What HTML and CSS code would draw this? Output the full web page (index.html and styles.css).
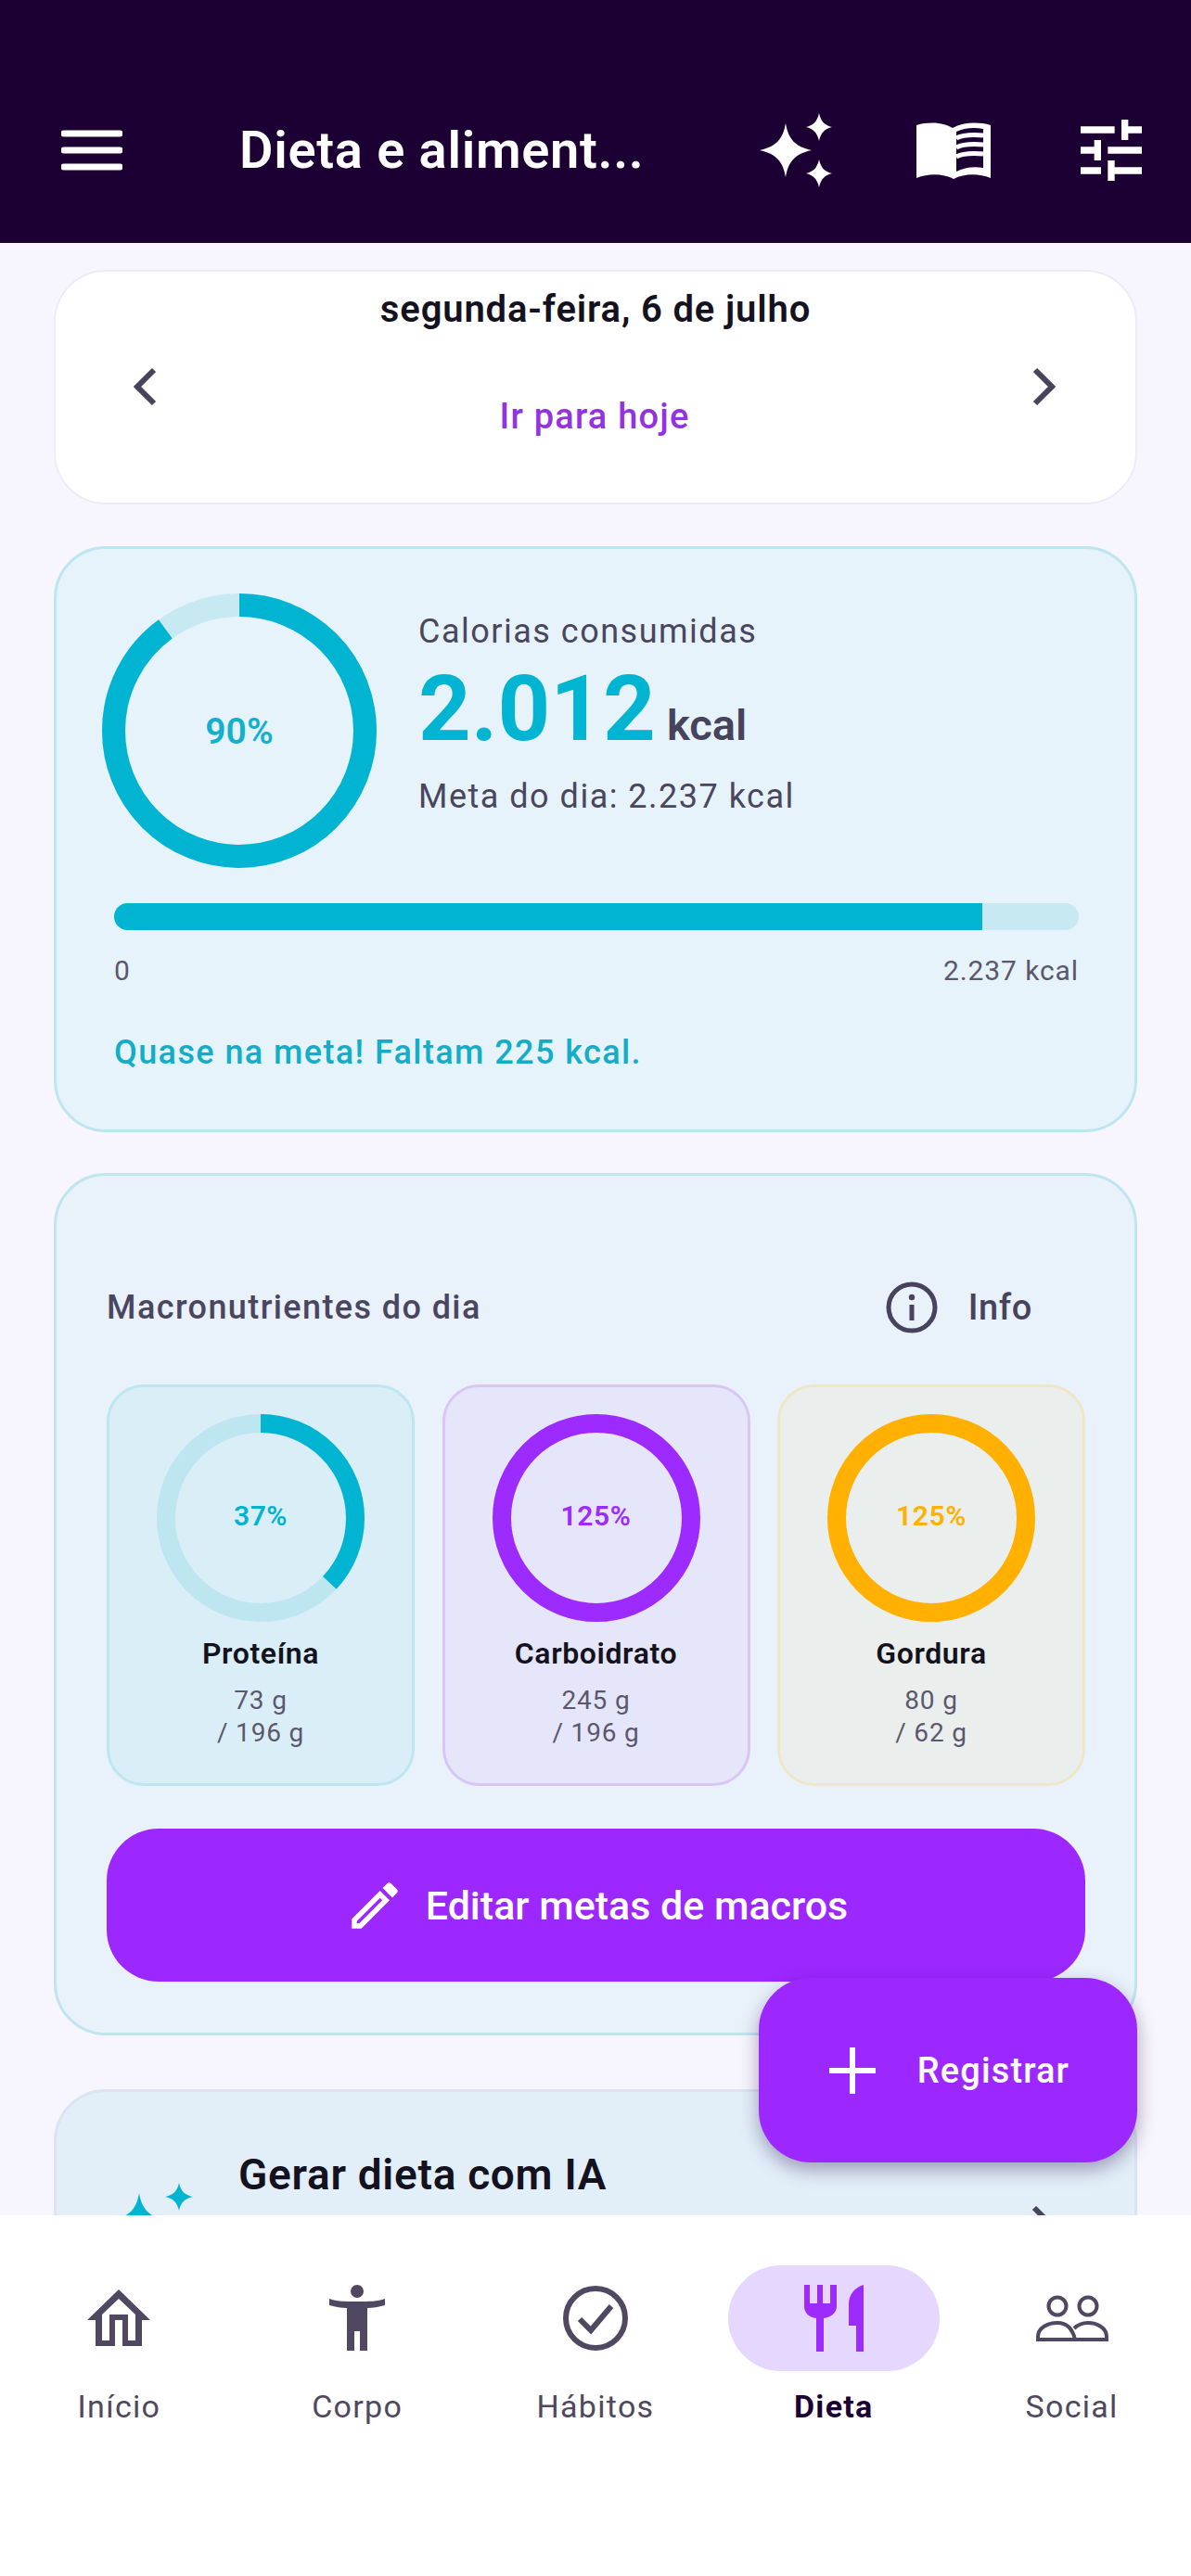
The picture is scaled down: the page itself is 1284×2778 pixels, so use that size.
FILE: index.html
```html
<!DOCTYPE html>
<html lang="pt-BR">
<head>
    <meta charset="UTF-8">
    <meta name="viewport" content="width=device-width, initial-scale=1.0">
    <title>Dieta e alimentação</title>
    <link rel="stylesheet" href="styles.css">
</head>
<body>
    <div class="screen">
        <div class="header">
            <svg class="menu-icon" width="66" height="44" viewBox="0 0 66 44">
                <path d="M3 4H63M3 22H63M3 40H63" stroke="#FFF" stroke-width="7" stroke-linecap="round" fill="none"/>
            </svg>
            <div class="header-title">Dieta e aliment...</div>
            <div class="header-actions">
                <svg width="80" height="82" viewBox="0 0 80 82">
                    <path fill="#FFF" d="M29 12C32 29 39 37 57 41C39 45 32 53 29 70C26 53 19 45 1 41C19 37 26 29 29 12Z"/>
                    <path fill="#FFF" d="M65 1C67 10 71 14 79 16C71 18 67 22 65 31C63 22 59 18 51 16C59 14 63 10 65 1Z"/>
                    <path fill="#FFF" d="M65 51C67 60 71 64 79 66C71 68 67 72 65 81C63 72 59 68 51 66C59 64 63 60 65 51Z"/>
                </svg>
                <svg width="80" height="62" viewBox="0 0 80 62">
                    <path fill="#FFF" d="M0 4C14 0 29 1 39 7C50 1 66 0 80 4V61C67 56 52 56 40 62C28 56 13 56 0 61Z"/>
                    <path fill="#1D0033" d="M43 11C51 7 62 6 72 8V50C61 48 51 50 43 54Z"/>
                    <path fill="none" stroke="#FFF" stroke-width="5" d="M43 18C51 14 60 14 72 15M43 28C51 24 60 24 72 25M43 38C51 34 60 34 72 35"/>
                </svg>
                <svg class="tune-icon" width="88" height="88" viewBox="0 0 24 24">
                    <path fill="#FFF" d="M3 17v2h6v-2H3zM3 5v2h10V5H3zm10 16v-2h8v-2h-8v-2h-2v6h2zM7 9v2H3v2h4v2h2V9H7zm14 4v-2H11v2h10zm-6-4h2V7h4V5h-4V3h-2v6z"/>
                </svg>
            </div>
        </div>

        <div class="main">
            <div class="date-card">
                <div class="date-title">segunda-feira, 6 de julho</div>
                <div class="date-row">
                    <svg width="28" height="42" viewBox="0 0 28 42"><path d="M24 3L6 21L24 39" class="chevron"/></svg>
                    <div class="today-link">Ir para hoje</div>
                    <svg width="28" height="42" viewBox="0 0 28 42"><path d="M4 3L22 21L4 39" class="chevron"/></svg>
                </div>
            </div>

            <div class="calorie-card">
                <div class="calorie-top">
                    <div class="ring ring-big">
                        <svg width="296" height="296" viewBox="0 0 296 296">
                            <circle class="ring-track teal-track" cx="148" cy="148" r="135.5" stroke-width="25"/>
                            <circle class="ring-value teal-value" cx="148" cy="148" r="135.5" stroke-width="25" pathLength="100" stroke-dasharray="90 100" transform="rotate(-90 148 148)"/>
                        </svg>
                        <div class="ring-label big-label">90%</div>
                    </div>
                    <div class="calorie-text">
                        <div class="calorie-caption">Calorias consumidas</div>
                        <div class="calorie-total"><span class="calorie-number">2.012</span><span class="calorie-unit">kcal</span></div>
                        <div class="calorie-goal">Meta do dia: 2.237 kcal</div>
                    </div>
                </div>
                <div class="bar"><div class="bar-fill" style="width: 90%"></div></div>
                <div class="bar-scale"><span>0</span><span>2.237 kcal</span></div>
                <div class="calorie-note">Quase na meta! Faltam 225 kcal.</div>
            </div>

            <div class="macro-card">
                <div class="macro-head">
                    <div class="macro-title">Macronutrientes do dia</div>
                    <div class="info">
                        <svg width="58" height="58" viewBox="0 0 58 58">
                            <circle cx="29" cy="29" r="25" fill="none" stroke="#47435C" stroke-width="5"/>
                            <path d="M29 26V43" stroke="#47435C" stroke-width="5"/>
                            <circle cx="29" cy="18" r="3.2" fill="#47435C"/>
                        </svg>
                        <span>Info</span>
                    </div>
                </div>
                <div class="macro-grid">
                    <div class="macro macro-protein">
                        <div class="ring ring-small">
                            <svg width="224" height="224" viewBox="0 0 224 224">
                                <circle class="ring-track teal-track-2" cx="112" cy="112" r="102" stroke-width="20"/>
                                <circle class="ring-value teal-value" cx="112" cy="112" r="102" stroke-width="20" pathLength="100" stroke-dasharray="37 100" transform="rotate(-90 112 112)"/>
                            </svg>
                            <div class="ring-label small-label teal-text">37%</div>
                        </div>
                        <div class="macro-name">Proteína</div>
                        <div class="macro-values">73 g<br>/ 196 g</div>
                    </div>
                    <div class="macro macro-carb">
                        <div class="ring ring-small">
                            <svg width="224" height="224" viewBox="0 0 224 224">
                                <circle class="ring-track purple-value" cx="112" cy="112" r="102" stroke-width="20"/>
                            </svg>
                            <div class="ring-label small-label purple-text">125%</div>
                        </div>
                        <div class="macro-name">Carboidrato</div>
                        <div class="macro-values">245 g<br>/ 196 g</div>
                    </div>
                    <div class="macro macro-fat">
                        <div class="ring ring-small">
                            <svg width="224" height="224" viewBox="0 0 224 224">
                                <circle class="ring-track amber-value" cx="112" cy="112" r="102" stroke-width="20"/>
                            </svg>
                            <div class="ring-label small-label amber-text">125%</div>
                        </div>
                        <div class="macro-name">Gordura</div>
                        <div class="macro-values">80 g<br>/ 62 g</div>
                    </div>
                </div>
                <div class="edit-button">
                    <svg width="66" height="66" viewBox="0 0 24 24">
                        <path fill="#FFF" d="M14.06 9.02l.92.92L5.92 19H5v-.92l9.06-9.06M17.66 3c-.25 0-.51.1-.7.29l-1.83 1.83 3.75 3.75 1.83-1.83c.39-.39.39-1.02 0-1.41l-2.34-2.34c-.2-.2-.45-.29-.71-.29zm-3.6 3.19L3 17.25V21h3.75L17.81 9.94l-3.75-3.75z"/>
                    </svg>
                    <span>Editar metas de macros</span>
                </div>
            </div>

            <div class="ai-card">
                <svg class="ai-icon" width="90" height="80" viewBox="0 0 90 80">
                    <path fill="#00B4D2" d="M29 12C32 29 39 37 57 41C39 45 32 53 29 70C26 53 19 45 1 41C19 37 26 29 29 12Z"/>
                    <path fill="#00B4D2" d="M72 1C74 10 78 14 87 16C78 18 74 22 72 31C70 22 66 18 57 16C66 14 70 10 72 1Z"/>
                </svg>
                <div class="ai-title">Gerar dieta com IA</div>
                <svg class="ai-chevron" width="28" height="42" viewBox="0 0 28 42"><path d="M4 3L22 21L4 39" class="chevron"/></svg>
            </div>
        </div>

        <div class="fab">
            <svg width="56" height="56" viewBox="0 0 56 56"><path d="M28 3V53M3 28H53" stroke="#FFF" stroke-width="6" fill="none"/></svg>
            <span>Registrar</span>
        </div>

        <div class="nav">
            <div class="nav-item">
                <div class="nav-icon">
                    <svg width="70" height="64" viewBox="0 0 70 64">
                        <path fill="#4F4860" d="M35 1L69 34H60V62H39V34H31V62H10V34H1ZM35 11L17 28V56H25V28H45V56H53V28Z"/>
                    </svg>
                </div>
                <div class="nav-label">Início</div>
            </div>
            <div class="nav-item">
                <div class="nav-icon">
                    <svg width="62" height="74" viewBox="0 0 62 74">
                        <circle cx="31" cy="8" r="7" fill="#4F4860"/>
                        <path fill="#4F4860" d="M1 16C9 19 18 19 31 19C44 19 53 19 61 16V23C54 25 48 26 42 26V72H34V51H28V72H20V26C14 26 8 25 1 23Z"/>
                    </svg>
                </div>
                <div class="nav-label">Corpo</div>
            </div>
            <div class="nav-item">
                <div class="nav-icon">
                    <svg width="72" height="72" viewBox="0 0 72 72">
                        <circle cx="36" cy="36" r="32" fill="none" stroke="#4F4860" stroke-width="6"/>
                        <path d="M19 37L31 49L53 23" fill="none" stroke="#4F4860" stroke-width="6"/>
                    </svg>
                </div>
                <div class="nav-label">Hábitos</div>
            </div>
            <div class="nav-item nav-item-active">
                <div class="nav-icon nav-pill">
                    <svg width="66" height="74" viewBox="0 0 66 74">
                        <path fill="#9D2BFF" d="M1 1H7V21H15V1H21V21H29V1H36V24C36 32 29 36 22 37V73H14V37C7 36 1 32 1 24Z"/>
                        <path fill="#9D2BFF" d="M65 1V73H57V45H49V22C49 12 55 4 65 1Z"/>
                    </svg>
                </div>
                <div class="nav-label">Dieta</div>
            </div>
            <div class="nav-item">
                <div class="nav-icon">
                    <svg width="80" height="60" viewBox="0 0 80 60">
                        <circle cx="24" cy="17" r="9.5" fill="none" stroke="#4F4860" stroke-width="4"/>
                        <circle cx="57" cy="17" r="9.5" fill="none" stroke="#4F4860" stroke-width="4"/>
                        <path d="M3 53V50C3 40 14 35 24 35C33 35 40 40 43 53ZM43 53H77V50C77 40 66 35 57 35C51 35 46 37 42 41" fill="none" stroke="#4F4860" stroke-width="4"/>
                    </svg>
                </div>
                <div class="nav-label">Social</div>
            </div>
        </div>
    </div>
</body>
</html>
```

FILE: styles.css
```css
html,
body {
    margin: 0;
    font-family: Roboto, 'Noto Sans', sans-serif;
    background-color: #F7F5FD;
}

.screen {
    position: relative;
    width: 1284px;
    height: 2778px;
    display: flex;
    flex-direction: column;
    overflow: hidden;
}

.header {
    height: 262px;
    flex: none;
    box-sizing: border-box;
    padding: 62px 42px 0 66px;
    background-color: #1D0033;
    display: flex;
    align-items: center;
}

.header-title {
    margin-left: 126px;
    flex: 1;
    color: #FFF;
    font-size: 56px;
    font-weight: 600;
    letter-spacing: 0.7px;
}

.header-actions {
    display: flex;
    align-items: center;
    gap: 90px;
}

.tune-icon {
    margin-left: -4px;
}

.main {
    flex: 1;
    min-height: 0;
    padding: 29px 58px 0 58px;
    display: flex;
    flex-direction: column;
}

.date-card {
    height: 253px;
    flex: none;
    box-sizing: border-box;
    padding-top: 18px;
    background-color: #FFF;
    border: 2px solid #EEEBF8;
    border-radius: 56px;
    margin-bottom: 45px;
}

.date-title {
    text-align: center;
    color: #14121E;
    font-size: 40px;
    font-weight: 600;
    line-height: 46px;
    letter-spacing: 0.85px;
}

.date-row {
    margin-top: 39px;
    padding: 0 84px 0 82px;
    display: flex;
    justify-content: space-between;
    align-items: flex-start;
}

.chevron {
    fill: none;
    stroke: #47435C;
    stroke-width: 6;
}

.today-link {
    margin-top: 30px;
    color: #9333E0;
    font-size: 38px;
    font-weight: 500;
    line-height: 46px;
    letter-spacing: 1.2px;
}

.calorie-card {
    height: 632px;
    flex: none;
    box-sizing: border-box;
    padding: 48px 60px 0 49px;
    background-color: #E6F3FA;
    border: 3px solid #BDE6F0;
    border-radius: 56px;
    margin-bottom: 44px;
}

.calorie-top {
    display: flex;
    gap: 45px;
}

.ring {
    position: relative;
    flex: none;
}

.ring svg {
    display: block;
}

.ring-track,
.ring-value {
    fill: none;
}

.teal-track { stroke: #C7E9F2; }
.teal-track-2 { stroke: #BDE6F1; }
.teal-value { stroke: #00B4D2; }
.purple-value { stroke: #9D2BFF; }
.amber-value { stroke: #FFB000; }
.teal-text { color: #00B4D2; }
.purple-text { color: #9D2BFF; }
.amber-text { color: #FFB000; }

.ring-label {
    position: absolute;
    inset: 0;
    display: flex;
    align-items: center;
    justify-content: center;
    font-weight: 600;
}

.big-label {
    color: #12B0CC;
    font-size: 39px;
    padding-top: 2px;
}

.small-label {
    font-size: 30px;
    letter-spacing: 0.6px;
    padding-bottom: 5px;
}

.calorie-text {
    padding-top: 18px;
}

.calorie-caption {
    color: #4A4660;
    font-size: 36px;
    line-height: 46px;
    letter-spacing: 1.5px;
}

.calorie-total {
    display: flex;
    align-items: baseline;
    gap: 12px;
    margin-top: 2px;
    line-height: 116px;
}

.calorie-number {
    color: #00B4D2;
    font-size: 99px;
    font-weight: 700;
}

.calorie-unit {
    color: #47435C;
    font-size: 47px;
    font-weight: 600;
}

.calorie-goal {
    margin-top: -4px;
    color: #4A4660;
    font-size: 36px;
    line-height: 46px;
    letter-spacing: 1.5px;
}

.bar {
    margin: 38px 0 0 13px;
    height: 29px;
    background-color: #C7E9F2;
    border-radius: 15px;
    overflow: hidden;
}

.bar-fill {
    height: 100%;
    background-color: #00B4D2;
}

.bar-scale {
    margin: 26px 0 0 13px;
    display: flex;
    justify-content: space-between;
    color: #5B586E;
    font-size: 30px;
    line-height: 36px;
    letter-spacing: 0.9px;
}

.calorie-note {
    margin: 47px 0 0 13px;
    color: #14ADC8;
    font-size: 36px;
    font-weight: 500;
    line-height: 46px;
    letter-spacing: 1.4px;
}

.macro-card {
    height: 930px;
    flex: none;
    box-sizing: border-box;
    padding: 112px 53px 0 54px;
    background-color: #E9F1FB;
    border: 3px solid #BFE5EF;
    border-radius: 56px;
    margin-bottom: 58px;
}

.macro-head {
    height: 60px;
    display: flex;
    align-items: center;
    justify-content: space-between;
}

.macro-title {
    color: #4A4660;
    font-size: 36px;
    font-weight: 500;
    letter-spacing: 1.4px;
}

.info {
    display: flex;
    align-items: center;
    gap: 32px;
    margin-right: 57px;
    color: #47435C;
    font-size: 38px;
    font-weight: 500;
    letter-spacing: 0.6px;
}

.macro-grid {
    margin-top: 53px;
    display: grid;
    grid-template-columns: repeat(3, 332px);
    justify-content: space-between;
}

.macro {
    height: 433px;
    box-sizing: border-box;
    padding-top: 29px;
    border: 3px solid;
    border-radius: 40px;
    display: flex;
    flex-direction: column;
    align-items: center;
}

.macro-protein {
    background-color: #DAEEF8;
    border-color: #BDE6F0;
}

.macro-carb {
    background-color: #E6E6FA;
    border-color: #D9C5F6;
}

.macro-fat {
    background-color: #EAEFED;
    border-color: #EFE6C8;
}

.macro-name {
    margin-top: 16px;
    color: #14121E;
    font-size: 32px;
    font-weight: 600;
    line-height: 36px;
    letter-spacing: 0.6px;
}

.macro-values {
    margin-top: 15px;
    text-align: center;
    color: #5B586E;
    font-size: 28px;
    line-height: 35px;
    letter-spacing: 0.8px;
}

.edit-button {
    margin-top: 46px;
    height: 165px;
    display: flex;
    align-items: center;
    justify-content: center;
    gap: 22px;
    background-color: #9D27FF;
    border-radius: 56px;
    color: #FFF;
    font-size: 43px;
    font-weight: 500;
}

.ai-card {
    position: relative;
    height: 300px;
    flex: none;
    box-sizing: border-box;
    padding: 62px 0 0 196px;
    background-color: #E2EFF9;
    border: 3px solid #DCE3F3;
    border-radius: 56px;
}

.ai-title {
    color: #14121E;
    font-size: 46px;
    font-weight: 600;
    line-height: 54px;
    letter-spacing: 0.7px;
}

.ai-icon {
    position: absolute;
    left: 60px;
    top: 97px;
}

.ai-chevron {
    position: absolute;
    right: 84px;
    top: 122px;
}

.fab {
    position: absolute;
    left: 818px;
    top: 2133px;
    width: 408px;
    height: 199px;
    display: flex;
    align-items: center;
    justify-content: center;
    gap: 42px;
    background-color: #9D27FF;
    border-radius: 56px;
    box-shadow: 0 8px 20px rgba(30, 0, 60, 0.35);
    color: #FFF;
    font-size: 38px;
    font-weight: 500;
    letter-spacing: 1.1px;
}

.nav {
    position: relative;
    height: 389px;
    flex: none;
    box-sizing: border-box;
    padding-top: 54px;
    background-color: #FFF;
    display: grid;
    grid-template-columns: repeat(5, 1fr);
    align-items: start;
}

.nav-item {
    display: flex;
    flex-direction: column;
    align-items: center;
}

.nav-icon {
    width: 228px;
    height: 114px;
    display: flex;
    align-items: center;
    justify-content: center;
}

.nav-pill {
    background-color: #E6D7FF;
    border-radius: 57px;
}

.nav-label {
    margin-top: 16px;
    color: #4F4860;
    font-size: 34px;
    line-height: 44px;
    letter-spacing: 1.3px;
}

.nav-item-active .nav-label {
    color: #1D0033;
    font-weight: 700;
}
```
